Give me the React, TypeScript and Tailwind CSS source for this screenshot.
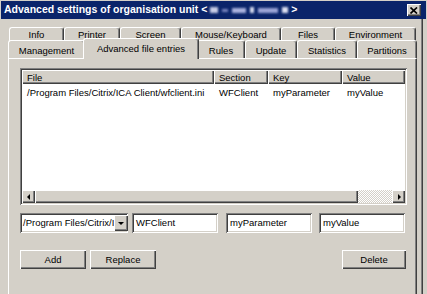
import React from "react";

const raised =
  "shadow-[inset_1px_1px_#ffffff,inset_-1px_-1px_#404040,inset_-2px_-2px_#808080]";
const sunken =
  "shadow-[inset_1px_1px_#808080,inset_-1px_-1px_#ffffff,inset_2px_2px_#404040,inset_-2px_-2px_#d4d0c8]";

type TabProps = { label: string; w: string; selected?: boolean; front?: boolean };

function Tab({ label, w, selected, front }: TabProps) {
  const base =
    "shrink-0 text-center leading-[12px] border-l border-t border-r border-l-white border-t-white border-r-[#404040] rounded-t-[3px] shadow-[inset_-1px_0_#808080] bg-[#d4d0c8]";
  if (selected) {
    return (
      <div className={`${base} ${w} relative z-10 h-[21px] -mb-[1px] -mx-[2px] pt-[4px]`}>
        {label}
      </div>
    );
  }
  return (
    <div className={`${base} ${w} ${front ? "h-[18px] pt-[4px]" : "h-[16px] pt-[1px]"}`}>
      {label}
    </div>
  );
}

function Arrow({ dir }: { dir: "left" | "right" | "down" }) {
  const pts =
    dir === "left" ? "5,1 5,7 2,4" : dir === "right" ? "3,1 3,7 6,4" : "1,3 7,3 4,6";
  return (
    <svg width="8" height="8" viewBox="0 0 8 8">
      <polygon points={pts} fill="#000" />
    </svg>
  );
}

const headers = [
  { label: "File", w: "w-[192px]" },
  { label: "Section", w: "w-[54px]" },
  { label: "Key", w: "w-[74px]" },
  { label: "Value", w: "w-[63px]" },
];

const row = [
  { text: "/Program Files/Citrix/ICA Client/wfclient.ini", w: "w-[192px]" },
  { text: "WFClient", w: "w-[54px]" },
  { text: "myParameter", w: "w-[74px]" },
  { text: "myValue", w: "w-[63px]" },
];

export default function App() {
  return (
    <div className="w-[427px] h-[294px] overflow-hidden bg-[#d4d0c8] font-['Liberation_Sans',Arial,sans-serif] text-[9.5px] text-black relative">
      {/* title bar */}
      <div className="mx-[1px] mt-[1px] h-[18px] bg-[#0a246a] flex items-center pl-[3px] pr-[5px]">
        <span className="text-white font-bold text-[10.5px] whitespace-nowrap">
          Advanced settings of organisation unit &lt;
        </span>
        <div className="flex items-center gap-[4px] mx-[3px] blur-[1px]">
          <div className="w-[8px] h-[6px] bg-[#c9cde6]" />
          <div className="w-[6px] h-[3px] bg-[#7a86c0]" />
          <div className="w-[14px] h-[5px] bg-[#aab2de]" />
          <div className="w-[4px] h-[6px] bg-[#d8dcf0]" />
          <div className="w-[20px] h-[5px] bg-[#9ba4d6]" />
          <div className="w-[6px] h-[6px] bg-[#dde0f2]" />
        </div>
        <span className="text-white font-bold text-[10.5px]">&gt;</span>
        <div
          className={`ml-auto w-[14px] h-[12px] bg-[#d4d0c8] ${raised} flex items-center justify-center`}
        >
          <svg width="8" height="7" viewBox="0 0 8 7">
            <path d="M0.5 0.5 L7 6.5 M7 0.5 L0.5 6.5" stroke="#000" strokeWidth="1.7" />
          </svg>
        </div>
      </div>

      {/* body */}
      <div className="pl-[8px] pr-[10px] pt-[8px] flex flex-col">
        {/* back tab row */}
        <div className="h-[13px] flex pl-[1px] overflow-visible">
          <Tab label="Info" w="w-[55px]" />
          <Tab label="Printer" w="w-[56px]" />
          <Tab label="Screen" w="w-[61px]" />
          <Tab label="Mouse/Keyboard" w="w-[100px]" />
          <Tab label="Files" w="w-[54px]" />
          <Tab label="Environment" w="w-[81px]" />
        </div>
        {/* front tab row */}
        <div className="h-[18px] flex items-end relative">
          <Tab label="Management" w="w-[77px]" front />
          <Tab label="Advanced file entries" w="w-[116px]" selected />
          <Tab label="Rules" w="w-[48px]" front />
          <Tab label="Update" w="w-[52px]" front />
          <Tab label="Statistics" w="w-[60px]" front />
          <Tab label="Partitions" w="w-[60px]" front />
        </div>

        {/* panel */}
        <div className="h-[240px] border-l border-t border-r border-l-white border-t-white border-r-[#404040] shadow-[inset_-1px_0_#808080] pl-[11px] pt-[9px]">
          {/* list view */}
          <div className={`w-[387px] h-[137px] bg-white p-[2px] ${sunken} flex flex-col`}>
            <div className="h-[14px] flex">
              {headers.map((h) => (
                <div
                  key={h.label}
                  className={`${h.w} shrink-0 h-full bg-[#d4d0c8] ${raised} pl-[5px] pt-[2px] leading-[12px]`}
                >
                  {h.label}
                </div>
              ))}
            </div>
            <div className="flex mt-[3px] leading-[12px] flex-1">
              {row.map((c) => (
                <div key={c.text} className={`${c.w} shrink-0 pl-[5px] whitespace-nowrap`}>
                  {c.text}
                </div>
              ))}
            </div>
            {/* horizontal scrollbar */}
            <div className="h-[13px] flex">
              <div className={`w-[13px] h-full bg-[#d4d0c8] ${raised} flex items-center justify-center`}>
                <Arrow dir="left" />
              </div>
              <div className={`w-[323px] h-full bg-[#d4d0c8] ${raised}`} />
              <div className="w-[34px] h-full bg-[image:repeating-conic-gradient(#d4d0c8_0_25%,#ffffff_0_50%)] bg-[length:2px_2px]" />
              <div className={`w-[13px] h-full bg-[#d4d0c8] ${raised} flex items-center justify-center`}>
                <Arrow dir="right" />
              </div>
            </div>
          </div>

          {/* inputs */}
          <div className="flex mt-[8px] h-[20px]">
            <div className={`w-[108px] h-full bg-white ${sunken} p-[2px] flex items-center`}>
              <span className="flex-1 pl-[1px] whitespace-nowrap leading-[12px]">
                /Program Files/Citrix/I
              </span>
              <div className={`w-[14px] h-full bg-[#d4d0c8] ${raised} flex items-center justify-center shrink-0`}>
                <Arrow dir="down" />
              </div>
            </div>
            <div className={`ml-[4px] w-[86px] h-full bg-white ${sunken} pl-[4px] flex items-center leading-[12px]`}>
              WFClient
            </div>
            <div className={`ml-[8px] w-[86px] h-full bg-white ${sunken} pl-[4px] flex items-center leading-[12px]`}>
              myParameter
            </div>
            <div className={`ml-[7px] w-[86px] h-full bg-white ${sunken} pl-[4px] flex items-center leading-[12px]`}>
              myValue
            </div>
          </div>

          {/* buttons */}
          <div className="flex mt-[17px] h-[19px] w-[387px]">
            <div className={`w-[66px] h-full ${raised} flex items-center justify-center leading-[12px]`}>Add</div>
            <div className={`ml-[4px] w-[66px] h-full ${raised} flex items-center justify-center leading-[12px]`}>Replace</div>
            <div className={`ml-auto mr-[1px] w-[64px] h-full ${raised} flex items-center justify-center leading-[12px]`}>Delete</div>
          </div>
        </div>
      </div>

      {/* window frame right edge */}
      <div className="absolute right-[5px] top-[19px] bottom-0 w-[1px] bg-[#808080]" />
      <div className="absolute right-[4px] top-[19px] bottom-0 w-[1px] bg-[#404040]" />
    </div>
  );
}
